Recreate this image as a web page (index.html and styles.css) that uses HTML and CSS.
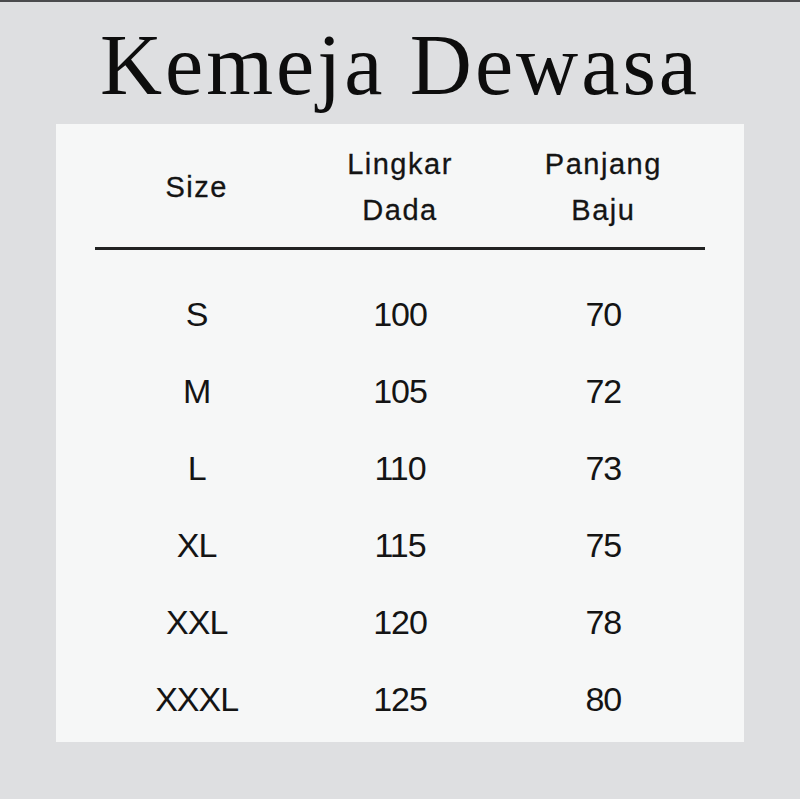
FILE: index.html
```html
<!DOCTYPE html>
<html>
<head>
<meta charset="utf-8">
<link rel="stylesheet" href="styles.css">
</head>
<body>
<div class="page">
  <h1 class="title">Kemeja Dewasa</h1>
  <div class="panel">
    <div class="table">
      <div class="head">
        <div class="hcell">Size</div>
        <div class="hcell">Lingkar<br>Dada</div>
        <div class="hcell">Panjang<br>Baju</div>
      </div>
      <div class="rows">
        <div class="row"><span>S</span><span>100</span><span>70</span></div>
        <div class="row"><span>M</span><span>105</span><span>72</span></div>
        <div class="row"><span>L</span><span>110</span><span>73</span></div>
        <div class="row"><span>XL</span><span>115</span><span>75</span></div>
        <div class="row"><span>XXL</span><span>120</span><span>78</span></div>
        <div class="row"><span>XXXL</span><span>125</span><span>80</span></div>
      </div>
    </div>
  </div>
</div>
</body>
</html>
```
FILE: styles.css
```css
html, body {
  margin: 0;
  padding: 0;
  background: #dedfe1;
}
body {
  border-top: 2px solid #4a4b4d;
  height: 797px;
  overflow: hidden;
}
.page {
  display: flex;
  flex-direction: column;
  align-items: center;
}
.title {
  margin: 13px 0 9px;
  height: 100px;
  line-height: 100px;
  font-family: "Liberation Serif", serif;
  font-weight: normal;
  font-size: 86px;
  letter-spacing: 3px;
  color: #0d0d0d;
  text-align: center;
}
.panel {
  width: 688px;
  height: 618px;
  background: #f6f7f7;
  box-sizing: border-box;
  padding: 17px 39px 0;
  font-family: "Liberation Sans", Arial, sans-serif;
  color: #141414;
}
.head {
  display: grid;
  grid-template-columns: repeat(3, 1fr);
  align-items: center;
  padding-bottom: 14px;
  border-bottom: 3px solid #222;
}
.hcell {
  text-align: center;
  font-size: 29px;
  line-height: 46px;
  letter-spacing: 1.5px;
  -webkit-text-stroke: 0.3px #141414;
}
.rows {
  padding-top: 26px;
}
.row {
  display: grid;
  grid-template-columns: repeat(3, 1fr);
  align-items: center;
  height: 77px;
  font-size: 34px;
}
.row span {
  text-align: center;
  letter-spacing: -1px;
}
```
